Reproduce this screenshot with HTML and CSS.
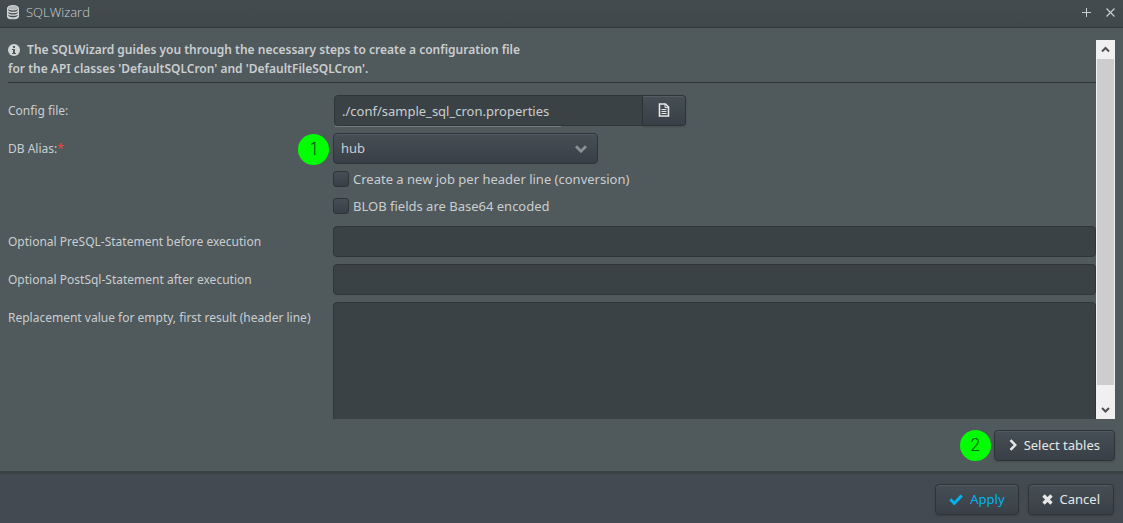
FILE: index.html
```html
<!DOCTYPE html>
<html lang="en">
  <head>
    <meta charset="UTF-8" />
    <title>SQLWizard</title>
    <link rel="stylesheet" href="styles.css">
  </head>
  <body>
    <div class="window">
      <header class="titlebar">
        <svg class="icon-db" viewBox="0 0 14 16" width="14" height="16">
          <path d="M1.600 4v8.500c0 1.300 2.400 2.300 5.400 2.300s5.400-1 5.400-2.300V4" fill="#454c4f" stroke="#d5d8d8" stroke-width="1.100" />
          <ellipse cx="7" cy="3.800" rx="5.400" ry="2.200" fill="#b4b8b9" stroke="#d5d8d8" />
          <path d="M1.600 6.300c1 2.900 9.800 2.900 10.800 0M1.600 9c1 2.900 9.800 2.900 10.800 0M1.600 11.700c1 2.900 9.800 2.900 10.800 0" fill="none" stroke="#d5d8d8" stroke-width="1.300" />
        </svg>
        <h1>SQLWizard</h1>
        <button type="button" class="tool" aria-label="Maximize">
          <svg viewBox="0 0 9 9" width="9" height="9"><path d="M4.500 0v9M0 4.500h9" stroke="currentColor" stroke-width="1" /></svg>
        </button>
        <button type="button" class="tool" aria-label="Close">
          <svg viewBox="0 0 9 9" width="9" height="9"><path d="M.5.5l8 8M8.500.5l-8 8" stroke="currentColor" stroke-width="1.200" /></svg>
        </button>
      </header>

      <main class="content">
        <div class="scroll">
          <form id="wizard" class="panel">
            <p class="info">
              <svg class="icon-info" viewBox="0 0 12 12" width="12" height="12">
                <circle cx="6" cy="6" r="6" fill="#d3d6d6" />
                <path d="M5 2h2v2H5zM4 5h3v4h1v1H4V9h1V6H4z" fill="#50595c" />
              </svg>
              The SQLWizard guides you through the necessary steps to create a configuration file<br />
              for the API classes 'DefaultSQLCron' and 'DefaultFileSQLCron'.
            </p>
            <hr />
            <div class="fields">
              <label for="config">Config file:</label>
              <div class="file">
                <input type="text" id="config" value="./conf/sample_sql_cron.properties" />
                <button type="button" class="btn" aria-label="Choose file">
                  <svg viewBox="0 0 12 14" width="12" height="14">
                    <path d="M1.500 1h6L10.500 4v9h-9z" fill="none" stroke="currentColor" stroke-width="1.600" />
                    <path d="M7 1v3.500h4M3.500 6.500h5M3.500 8.500h5M3.500 10.500h5" fill="none" stroke="currentColor" stroke-width="1" />
                  </svg>
                </button>
              </div>

              <label for="alias">DB Alias:<span class="required">*</span></label>
              <div class="select">
                <span class="step step-left">1</span>
                <select id="alias">
                  <option>hub</option>
                </select>
                <svg class="chevron" viewBox="0 0 12 8" width="12" height="8"><path d="M1 1.200l5 5 5-5" fill="none" stroke="#8b9093" stroke-width="2.800" /></svg>
              </div>

              <div class="checks">
                <label><input type="checkbox" /> Create a new job per header line (conversion)</label>
                <label><input type="checkbox" /> BLOB fields are Base64 encoded</label>
              </div>

              <label for="pre">Optional PreSQL-Statement before execution</label>
              <input type="text" id="pre" />

              <label for="post">Optional PostSql-Statement after execution</label>
              <input type="text" id="post" />

              <label for="replacement">Replacement value for empty, first result (header line)</label>
              <textarea id="replacement"></textarea>
            </div>
          </form>
          <div class="scrollbar">
            <svg viewBox="0 0 19 19" width="19" height="19"><path d="M6 11.500L9.500 8l3.500 3.500" fill="none" stroke="#505050" stroke-width="2" /></svg>
            <div class="thumb"></div>
            <svg viewBox="0 0 19 19" width="19" height="19"><path d="M6 8l3.500 3.500L13 8" fill="none" stroke="#505050" stroke-width="2" /></svg>
          </div>
        </div>

        <div class="next">
          <span class="step">2</span>
          <button type="button" class="btn">
            <svg viewBox="0 0 8 12" width="8" height="12"><path d="M1.500 1.200L6.200 6l-4.700 4.800" fill="none" stroke="currentColor" stroke-width="2.500" /></svg>
            Select tables
          </button>
        </div>
      </main>

      <footer class="footer">
        <button type="submit" form="wizard" class="btn primary">
          <svg viewBox="0 0 14 11" width="14" height="11"><path d="M1.300 5.300l4 4L12.700 1.500" fill="none" stroke="currentColor" stroke-width="3" /></svg>
          Apply
        </button>
        <button type="button" class="btn">
          <svg viewBox="0 0 11 11" width="11" height="11"><path d="M1.500 1.500l8 8M9.500 1.500l-8 8" stroke="currentColor" stroke-width="3.400" /></svg>
          Cancel
        </button>
      </footer>
    </div>
  </body>
</html>
```
FILE: styles.css
```css
* {
  box-sizing: border-box;
}
body {
  margin: 0;
  font-family: "Noto Sans", "Open Sans", sans-serif;
  font-size: 13px;
  color: #caced0;
}
button,
input,
select,
textarea {
  font: inherit;
  color: inherit;
}
.window {
  display: flex;
  flex-direction: column;
  height: 100vh;
  background: #50595c;
}
.titlebar {
  display: flex;
  align-items: center;
  height: 28px;
  padding: 0 6px 3px;
  background: linear-gradient(#434b4e, #3f484b);
  border-bottom: 1px solid #33393c;
}
.titlebar h1 {
  flex: 1;
  margin: 0 0 0 6px;
  font-family: "Open Sans", sans-serif;
  font-size: 13px;
  font-weight: 300;
}
.tool {
  display: flex;
  justify-content: center;
  width: 24px;
  padding: 0;
  background: none;
  border: none;
}
.tool:last-child {
  margin-right: -5px;
}
.content {
  flex: 1;
  display: flex;
  flex-direction: column;
  min-height: 0;
  padding: 12px 8px 10px;
}
.scroll {
  flex: 1;
  display: flex;
  min-height: 0;
}
.panel {
  flex: 1;
  overflow: hidden;
}
.info {
  margin: 0;
  font-size: 12px;
  font-weight: 600;
  line-height: 19px;
}
.icon-info {
  margin-right: 4px;
  vertical-align: -2px;
}
hr {
  margin: 4px 0 12px;
  border: none;
  border-top: 1px solid #343437;
}
.fields {
  display: grid;
  grid-template-columns: 325px 1fr;
  row-gap: 7px;
}
.fields > label {
  font-size: 12px;
  line-height: 31px;
}
.required {
  color: #ed473b;
}
input[type="text"],
textarea {
  width: 100%;
  height: 31px;
  padding: 0 7px;
  background: #3b4245;
  border: 1px solid #2f3538;
  border-radius: 4px;
}
textarea {
  display: block;
  height: 160px;
  padding: 7px;
  resize: none;
}
.btn {
  display: flex;
  align-items: center;
  justify-content: center;
  gap: 7px;
  height: 31px;
  padding: 0 14px 1px;
  color: #e6e8e8;
  background: linear-gradient(#464f55, #393f47);
  border: 1px solid #2f3439;
  border-radius: 4px;
  box-shadow: inset 0 1px #535c61, 0 1px 2px rgba(0, 0, 0, 0.15);
}
.file {
  position: relative;
  display: flex;
  width: 353px;
  padding-left: 1px;
}
.file::after {
  content: "";
  position: absolute;
  top: 100%;
  left: 2px;
  width: 226px;
  height: 1px;
  background: #757c7f;
}
.file input[type="text"] {
  border-radius: 4px 0 0 4px;
}
.file .btn {
  flex: 0 0 43px;
  padding: 0 0 1px;
  border-left: none;
  border-radius: 0 4px 4px 0;
}
.select {
  position: relative;
  width: 265px;
}
.select select {
  display: block;
  width: 100%;
  height: 31px;
  padding: 0 7px 1px;
  appearance: none;
  background: linear-gradient(#464f55, #393f47);
  border: 1px solid #2f3439;
  border-radius: 4px;
  box-shadow: inset 0 1px #535c61;
}
.chevron {
  position: absolute;
  top: 12px;
  right: 11px;
  pointer-events: none;
}
.step {
  width: 31px;
  height: 31px;
  border-radius: 50%;
  background: #00ff00;
  color: #005a08;
  font-family: Inter, "Liberation Sans", sans-serif;
  font-size: 17px;
  font-weight: 300;
  line-height: 30px;
  text-align: center;
}
.step-left {
  position: absolute;
  top: 1px;
  left: -35px;
}
.checks {
  grid-column: 2;
  display: grid;
  gap: 11px;
  padding-bottom: 5px;
}
.checks label {
  display: flex;
  align-items: center;
  gap: 4px;
  line-height: 16px;
}
.checks input {
  width: 16px;
  height: 16px;
  margin: 0;
  appearance: none;
  background: linear-gradient(#464f55, #393f47);
  border: 1px solid #2f3439;
  border-radius: 3px;
}
.scrollbar {
  flex: 0 0 19px;
  display: flex;
  flex-direction: column;
  background: #f0f0f0;
}
.thumb {
  flex: 1;
  margin: 0 1px 15px;
  background: #cdcdcd;
}
.next {
  display: flex;
  justify-content: flex-end;
  gap: 3px;
  padding-top: 11px;
}
.footer {
  display: flex;
  justify-content: flex-end;
  gap: 9px;
  padding: 10px 9px 8px;
  background: #434a51;
  border-top: 3px solid #3b4245;
}
.footer .btn {
  padding: 0 13px 1px;
}
.footer .primary {
  color: #00b4f0;
}
```
